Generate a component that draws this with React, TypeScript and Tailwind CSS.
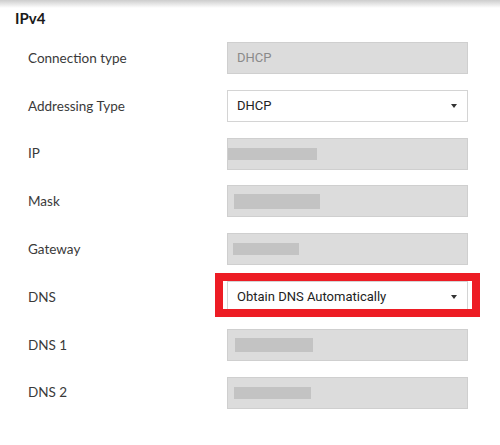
import React from "react";

type Row = {
  label: string;
  kind: "readonly" | "select" | "masked";
  value?: string;
  mask?: { left: number; width: number; height: number };
  highlight?: boolean;
};

const rows: Row[] = [
  { label: "Connection type", kind: "readonly", value: "DHCP" },
  { label: "Addressing Type", kind: "select", value: "DHCP" },
  { label: "IP", kind: "masked", mask: { left: 0, width: 89, height: 12 } },
  { label: "Mask", kind: "masked", mask: { left: 6, width: 86, height: 15 } },
  { label: "Gateway", kind: "masked", mask: { left: 5, width: 66, height: 12 } },
  { label: "DNS", kind: "select", value: "Obtain DNS Automatically", highlight: true },
  { label: "DNS 1", kind: "masked", mask: { left: 7, width: 78, height: 14 } },
  { label: "DNS 2", kind: "masked", mask: { left: 6, width: 77, height: 12 } },
];

function Caret() {
  return (
    <svg width="6" height="4" viewBox="0 0 6 4" className="shrink-0">
      <path d="M0 0h6L3 4z" fill="#333" />
    </svg>
  );
}

function Field({ row }: { row: Row }) {
  if (row.kind === "select") {
    return (
      <div className="relative">
        <div className="flex h-[32px] w-[241px] items-center justify-between border border-[#d4d4d4] bg-white pl-[9px] pr-[10px] text-[13px] text-[#222] [font-family:Roboto,Arial,sans-serif]">
          <span>{row.value}</span>
          <Caret />
        </div>
        {/* red highlight drawn over the select */}
        {row.highlight && (
          <div className="pointer-events-none absolute -inset-x-[12px] -top-[8px] -bottom-[4px] border-[8px] border-[#ed1c24]" />
        )}
      </div>
    );
  }
  return (
    <div className="flex h-[32px] w-[241px] items-center border border-[#cfcfcf] bg-[#dcdcdc] pl-[9px] text-[13px] text-[#8a8a8a] [font-family:Roboto,Arial,sans-serif]">
      {row.kind === "readonly" && <span>{row.value}</span>}
      {row.mask && (
        <div
          className="-ml-[9px] bg-[#c3c3c3]"
          style={{
            marginLeft: row.mask.left - 9,
            width: row.mask.width,
            height: row.mask.height,
          }}
        />
      )}
    </div>
  );
}

export default function App() {
  return (
    <div className="h-[445px] w-[500px] overflow-hidden bg-white [font-family:Lato,'Noto_Sans',sans-serif]">
      <div className="h-[8px] bg-gradient-to-b from-[#cdcdcd] to-white" />
      <h2 className="pl-[15px] text-[15px] font-bold leading-[20px] text-[#1a1a1a]">
        IPv4
      </h2>
      <div className="mt-[14px] grid grid-cols-[199px_241px] gap-y-[15.8px] pl-[28px]">
        {rows.map((row) => (
          <React.Fragment key={row.label}>
            <div className="flex h-[32px] items-center text-[13.5px] text-[#3a3a3a]">
              {row.label}
            </div>
            <Field row={row} />
          </React.Fragment>
        ))}
      </div>
    </div>
  );
}
